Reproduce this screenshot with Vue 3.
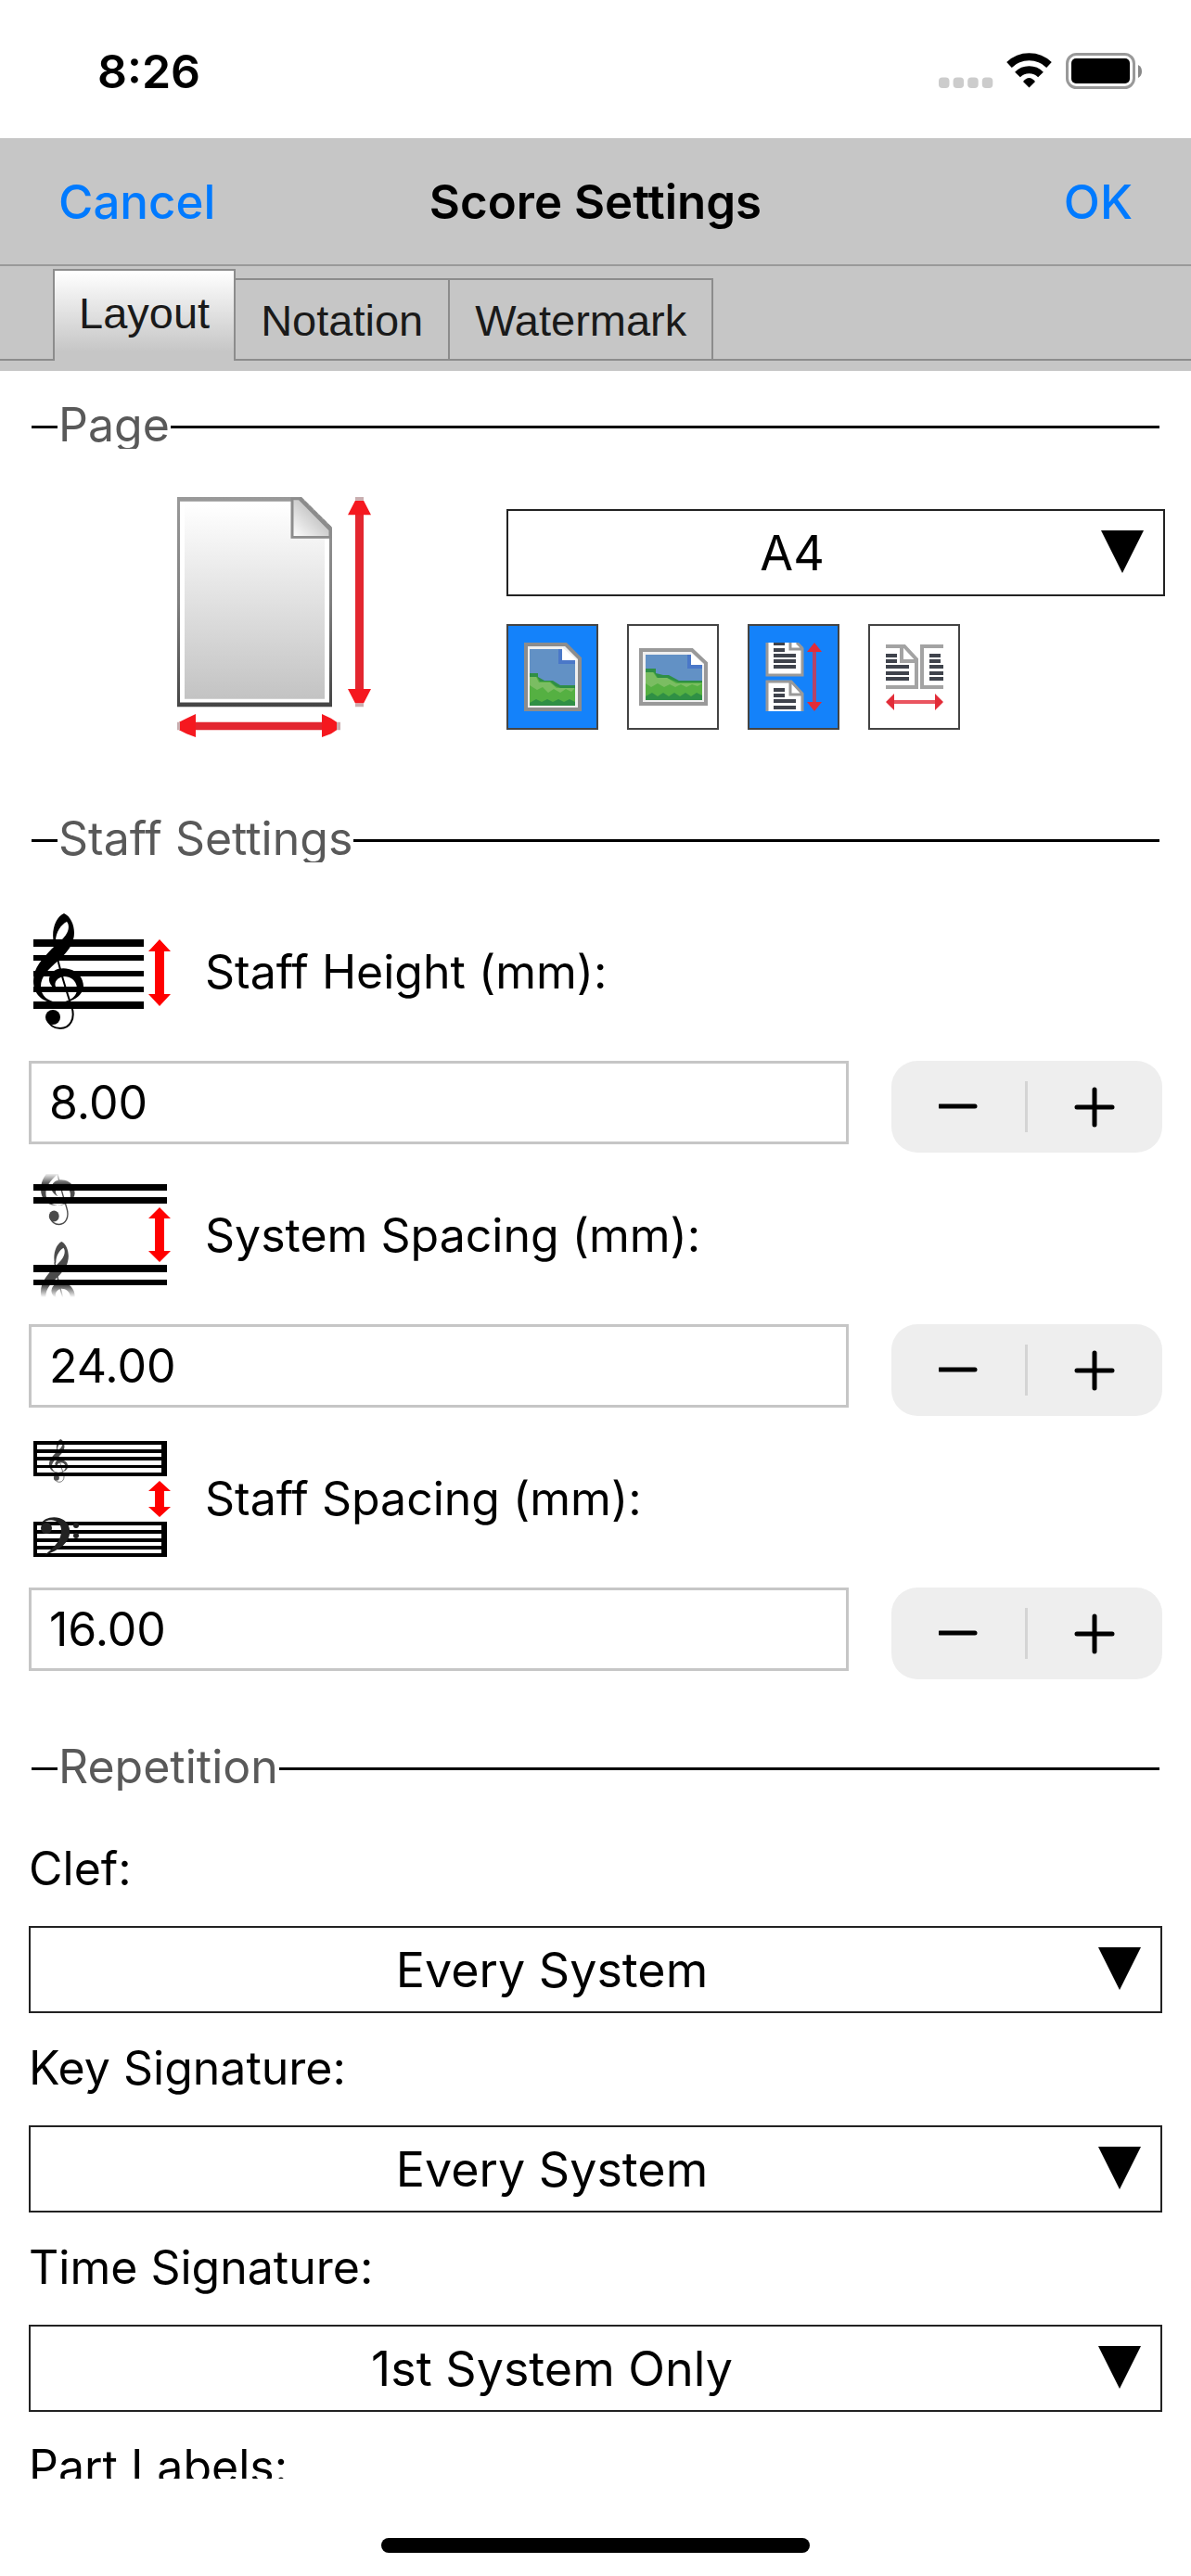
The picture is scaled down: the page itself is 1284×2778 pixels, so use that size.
<template>
  <div class="screen">
    <!-- shared shapes for the icons -->
    <svg class="defs" width="0" height="0" aria-hidden="true">
      <symbol id="treble" viewBox="0 0 56 126" preserveAspectRatio="none">
        <path d="M33 0C42 4 46 18 43 28C41 37 34 44 27 51C16 60 8 68 8 79C8 89 16 95 26 96C12 98 0 88 0 73C0 58 10 49 20 38C23 35 28 31 32 27C39 20 39 12 36 9C30 12 24 20 24 30L22 32C19 18 24 4 33 0Z" />
        <path d="M32 84C22 83 16 76 17 70C19 60 30 58 38 60C48 62 54 70 54 79C53 90 40 97 26 96C38 96 48 90 47 80C46 72 40 68 33 68C26 69 22 74 24 79C25 82 28 84 32 84Z" />
        <path d="M22 30C26 52 36 85 41 100C46 114 39 124 29 124C22 124 17 120 15 114" fill="none" stroke="#000" stroke-width="2" />
        <circle cx="21" cy="112" r="8" />
      </symbol>
    </svg>

    <div class="status">
      <span class="time">8:26</span>
      <svg width="220" height="40" viewBox="0 0 220 40" aria-hidden="true">
        <path d="M4 26h4a4 4 0 0 1 4 4v4a4 4 0 0 1 -4 4h-4a4 4 0 0 1 -4 -4v-4a4 4 0 0 1 4 -4z" fill="none" />
        <rect v-for="n in 4" :key="n" :x="n * 15.6 - 15.6" y="26.5" width="11.5" height="11.5" rx="4" fill="#ccc" />
        <g fill="none" stroke="#000" stroke-width="8">
          <path d="M76 13A31 31 0 0 1 119 13" />
          <path d="M85 23.5A17.5 17.5 0 0 1 110 23.5" />
        </g>
        <path d="M97.5 37.5L91 31Q97.5 23 104 31Z" />
        <rect x="138.5" y="1.5" width="72" height="36" rx="10" fill="none" stroke="#999" stroke-width="3" />
        <rect x="143" y="6" width="63" height="27" rx="5" />
        <path d="M215 13Q219 15 219 20Q219 25 215 27Z" fill="#888" />
      </svg>
    </div>

    <header class="top">
      <nav class="bar">
        <button type="button" class="action">Cancel</button>
        <h1>Score Settings</h1>
        <button type="button" class="action ok">OK</button>
      </nav>
      <div class="tabs" role="tablist">
        <button
          v-for="tab in tabs"
          :key="tab"
          type="button"
          role="tab"
          class="tab"
          :class="{ active: tab === activeTab }"
          :aria-selected="tab === activeTab"
          @click="activeTab = tab"
        >{{ tab }}</button>
      </div>
    </header>

    <main class="content">
      <section>
        <h2 class="legend"><span>Page</span></h2>
        <div class="page-row">
          <svg class="page-icon" width="212" height="260" viewBox="0 0 212 270" preserveAspectRatio="none" aria-hidden="true">
            <defs>
              <linearGradient id="edge" x1="0" y1="0" x2="0" y2="1">
                <stop offset="0" stop-color="#999" />
                <stop offset="0.5" stop-color="#808080" />
                <stop offset="1" stop-color="#444" />
              </linearGradient>
              <linearGradient id="sheet" x1="0" y1="0" x2="0" y2="1">
                <stop offset="0" stop-color="#fff" />
                <stop offset="1" stop-color="#c3c3c3" />
              </linearGradient>
              <linearGradient id="fold" x1="0" y1="1" x2="1" y2="0">
                <stop offset="0" stop-color="#fff" />
                <stop offset="0.6" stop-color="#c8c8c8" />
              </linearGradient>
            </defs>
            <path d="M0 0H134L167 34V235H0Z" fill="url(#edge)" />
            <path d="M3 5H132L164 37V230H3Z" fill="#fff" />
            <path d="M8 8H123V46H159V226H8Z" fill="url(#sheet)" />
            <path d="M124 2V45H165V37L132 2Z" fill="url(#fold)" stroke="#8c8c8c" stroke-width="3" />
            <path d="M132 1L166 36" stroke="#8c8c8c" stroke-width="4" stroke-dasharray="5 2" />
            <path d="M192 17H201V218H192ZM9 252V261H167V252Z" fill="#e3262f" />
            <path d="M192 4H201L205 12L209 20H184L188 12ZM192 231H201L205 223L209 215H184L188 223ZM2 252V261L10 265L20 269V243L10 248ZM172 252V261L166 265L156 269V243L166 248Z" fill="#f5181f" />
            <path d="M192 0H201V4H192ZM192 231H201V235H192ZM0 252H3V261H0ZM172 252H176V261H172Z" fill="#c9aeb0" />
          </svg>
          <div class="page-controls">
            <div class="select">
              <select v-model="paper" aria-label="Page size">
                <option>A4</option>
                <option>A5</option>
                <option>Letter</option>
              </select>
              <svg class="arrow" width="46" height="46" viewBox="0 0 46 46" aria-hidden="true"><path d="M0 0H46L23 46Z" /></svg>
            </div>
            <div class="modes">
              <button type="button" class="mode" :class="{ on: orientation === 'portrait' }" aria-label="Portrait" @click="orientation = 'portrait'">
                <svg width="74" height="74" viewBox="0 0 74 74">
                  <path d="M8 2H51L66 17V72H8Z" fill="#efefef" stroke="#8c8c8c" stroke-width="4" />
                  <path d="M12 7H45V23H61V68H12Z" fill="#6291c5" />
                  <path d="M45 7V21H61" fill="none" stroke="#4a78c8" stroke-width="4" />
                  <path d="M47 5L63 19H47Z" fill="#fff" />
                  <path d="M12 33H21V37L28 41H37L45 46H61V68H12Z" fill="#2f8f45" />
                  <path d="M12 37H20L23 42H34L40 47L48 50H61V64L55 61L49 64L43 61L37 64L31 61L25 64L19 61L12 65Z" fill="#55b042" />
                  <path d="M12 37H19L22 43H34L41 49H61L57 53L51 50L45 54L38 50L32 54L26 48L20 51L12 46Z" fill="#7bbd62" />
                </svg>
              </button>
              <button type="button" class="mode" :class="{ on: orientation === 'landscape' }" aria-label="Landscape" @click="orientation = 'landscape'">
                <svg width="74" height="74" viewBox="0 0 74 74">
                  <path d="M2 8H57L72 22V66H2Z" fill="#efefef" stroke="#999" stroke-width="4" />
                  <path d="M7 13H55V28H68V62H7Z" fill="#6291c5" />
                  <path d="M54 13V26H68" fill="none" stroke="#4a78c8" stroke-width="4" />
                  <path d="M56 11L70 24H56Z" fill="#fff" />
                  <path d="M7 28H18V33L26 35H32L43 41H68V62H7Z" fill="#2f8f45" />
                  <path d="M7 32H16L20 38H30L42 43H68V57L62 54L56 58L50 54L44 58L38 54L32 58L26 54L20 58L14 54L7 58Z" fill="#55b042" />
                  <path d="M7 32H15L19 38H30L40 44H68L63 47L57 45L51 48L45 45L39 48L33 45L27 48L20 44L13 48L7 44Z" fill="#7bbd62" />
                </svg>
              </button>
              <button type="button" class="mode" :class="{ on: flow === 'vertical' }" aria-label="Vertical pages" @click="flow = 'vertical'">
                <svg width="74" height="74" viewBox="0 0 74 74">
                  <path d="M8 0V35H46V6L41 0Z" fill="#fff" />
                  <path d="M8 0V35H46V7H33V0M40 0L46 6" fill="none" stroke="#999" stroke-width="3" />
                  <path d="M8 74V42H34L46 55V74Z" fill="#fff" />
                  <path d="M8 74V42H34L46 55V74M33 42V56H46" fill="none" stroke="#999" stroke-width="3" />
                  <path d="M15 1H27M15 8H27M15 14H39M15 20H39M15 26H39M15 51H27M15 57H27M15 63H39M15 70H39" stroke="#3f434c" stroke-width="4" />
                  <path d="M59 7V67" stroke="#b34468" stroke-width="4" />
                  <path d="M59 0L67 10H51ZM59 74L67 64H51Z" fill="#e22c38" />
                </svg>
              </button>
              <button type="button" class="mode" :class="{ on: flow === 'horizontal' }" aria-label="Horizontal pages" @click="flow = 'horizontal'">
                <svg width="74" height="74" viewBox="0 0 74 74">
                  <path d="M6 4H26L39 18V48H6M23 5V20H38M68 4H45V48H68" fill="none" stroke="#a3a3a3" stroke-width="4" />
                  <path d="M6 14H18M6 20H18M6 26H31M6 33H31M6 39H31M53 14H65M53 20H65M53 26H68M53 33H68M53 39H68" stroke="#3f434c" stroke-width="4" />
                  <path d="M12 64H62" stroke="#ea5560" stroke-width="4" />
                  <path d="M6 64L15 55V73ZM68 64L59 55V73Z" fill="#e22c38" />
                </svg>
              </button>
            </div>
          </div>
        </div>
      </section>

      <section>
        <h2 class="legend"><span>Staff Settings</span></h2>
        <div class="staff">
          <template v-for="(field, i) in staffFields" :key="field.id">
            <label class="staff-label" :for="field.id">
              <svg v-if="i === 0" width="148" height="126" viewBox="0 0 148 126" aria-hidden="true">
                <path d="M0 28H119V36H0ZM0 45H119V51H0ZM0 62H119V68H0ZM0 79H119V85H0ZM0 95H119V103H0Z" />
                <use href="#treble" width="56" height="126" />
                <path class="red" d="M136 28L148 41H141V87H148L136 100L124 87H131V41H124Z" />
              </svg>
              <svg v-else-if="i === 1" width="148" height="134" viewBox="0 0 148 134" aria-hidden="true">
                <defs>
                  <linearGradient id="fadeUp" x1="0" y1="0" x2="0" y2="1">
                    <stop offset="0" stop-color="#fff" />
                    <stop offset="1" stop-color="#fff" stop-opacity="0" />
                  </linearGradient>
                  <linearGradient id="fadeDown" x1="0" y1="1" x2="0" y2="0">
                    <stop offset="0" stop-color="#fff" />
                    <stop offset="1" stop-color="#fff" stop-opacity="0" />
                  </linearGradient>
                </defs>
                <path d="M0 12H144V19H0ZM0 26H144V33H0ZM0 99H144V107H0ZM0 115H144V121H0Z" />
                <svg y="1" width="60" height="56" opacity="0.7">
                  <use href="#treble" x="8" y="-38" width="38" height="94" />
                </svg>
                <svg y="74" width="60" height="60" opacity="0.7">
                  <use href="#treble" x="8" y="0" width="38" height="94" />
                </svg>
                <rect x="6" y="0" width="42" height="12" fill="url(#fadeUp)" />
                <rect x="6" y="121" width="42" height="13" fill="url(#fadeDown)" />
                <path class="red" d="M136 37L148 49H141V84H148L136 96L124 84H131V49H124Z" />
              </svg>
              <svg v-else width="148" height="128" viewBox="0 0 148 128" aria-hidden="true">
                <path d="M0 2H144V40H0ZM4 6V11H138V6ZM4 15V19H138V15ZM4 23V28H138V23ZM4 31V36H138V31Z" fill-rule="evenodd" />
                <path d="M0 89H144V127H0ZM4 93V98H138V93ZM4 102V107H138V102ZM4 111V115H138V111ZM4 119V123H138V119Z" fill-rule="evenodd" />
                <use href="#treble" x="17" y="0" width="21" height="47" opacity="0.7" />
                <g fill="#222">
                  <circle cx="14" cy="96" r="6" />
                  <path d="M8 92C11 82 36 80 39 97C41 111 28 120 12 125C22 117 31 109 30 97C29 86 16 84 8 92Z" />
                  <circle cx="46" cy="93" r="3" />
                  <circle cx="46" cy="104" r="3" />
                </g>
                <path class="red" d="M136 45L148 56H141V73H148L136 84L124 73H131V56H124Z" />
              </svg>
              <span>{{ field.label }}</span>
            </label>
            <div class="staff-input">
              <input :id="field.id" v-model="field.value" type="text" inputmode="decimal" />
              <div class="stepper">
                <button type="button" :aria-label="'Decrease ' + field.label" @click="step(field, -1)">
                  <svg width="44" height="44" viewBox="0 0 44 44"><path d="M1 21H39" /></svg>
                </button>
                <button type="button" :aria-label="'Increase ' + field.label" @click="step(field, 1)">
                  <svg width="44" height="44" viewBox="0 0 44 44"><path d="M3 22H41M22 3V41" /></svg>
                </button>
              </div>
            </div>
          </template>
        </div>
      </section>

      <section>
        <h2 class="legend"><span>Repetition</span></h2>
        <div class="repetition">
          <div v-for="item in repetition" :key="item.id" class="rep-field">
            <label :for="item.id">{{ item.label }}</label>
            <div class="select">
              <select :id="item.id" v-model="item.value">
                <option v-for="option in repeatOptions" :key="option">{{ option }}</option>
              </select>
              <svg class="arrow" width="46" height="46" viewBox="0 0 46 46" aria-hidden="true"><path d="M0 0H46L23 46Z" /></svg>
            </div>
          </div>
        </div>
      </section>
    </main>

    <footer class="home"><div class="home-bar"></div></footer>
  </div>
</template>

<script setup>
import { ref } from 'vue'

const tabs = ['Layout', 'Notation', 'Watermark']
const activeTab = ref('Layout')

const paper = ref('A4')
const orientation = ref('portrait')
const flow = ref('vertical')

const staffFields = ref([
  { id: 'staff-height', label: 'Staff Height (mm):', value: '8.00' },
  { id: 'system-spacing', label: 'System Spacing (mm):', value: '24.00' },
  { id: 'staff-spacing', label: 'Staff Spacing (mm):', value: '16.00' }
])

const repeatOptions = ['Every System', '1st System Only', 'Never']
const repetition = ref([
  { id: 'clef', label: 'Clef:', value: 'Every System' },
  { id: 'key-signature', label: 'Key Signature:', value: 'Every System' },
  { id: 'time-signature', label: 'Time Signature:', value: '1st System Only' },
  { id: 'part-labels', label: 'Part Labels:', value: 'Every System' }
])

function step(field, amount) {
  const next = (parseFloat(field.value) || 0) + amount
  field.value = Math.max(0, next).toFixed(2)
}
</script>

<style>
body {
  margin: 0;
  background: #fff;
}
</style>

<style scoped>
.screen {
  display: flex;
  flex-direction: column;
  height: 100vh;
  overflow: hidden;
  background: #fff;
  color: #000;
  font-family: Inter, "Liberation Sans", sans-serif;
  font-size: 50px;
}
.screen * {
  box-sizing: border-box;
}
.defs {
  position: absolute;
}
button,
input,
select {
  margin: 0;
  padding: 0;
  border: 0;
  border-radius: 0;
  background: none;
  color: inherit;
  font: inherit;
}
svg {
  display: block;
  flex: none;
}
.status {
  display: flex;
  align-items: center;
  justify-content: space-between;
  flex: none;
  height: 149px;
  padding: 5px 52px 0 105px;
}
.time {
  font-weight: 600;
}
.top {
  flex: none;
  background: #c6c6c6;
}
.bar {
  display: grid;
  grid-template-columns: 1fr auto 1fr;
  align-items: center;
  height: 138px;
  padding: 0 63px;
  border-bottom: 2px solid #999;
}
.bar h1 {
  margin: 0;
  font-size: 51px;
  font-weight: 600;
}
.action {
  justify-self: start;
  color: #007aff;
  font-size: 51px;
  font-weight: 500;
}
.ok {
  justify-self: end;
}
.tabs {
  display: flex;
  align-items: flex-end;
  height: 102px;
  margin-bottom: 11px;
  padding-left: 57px;
  border-bottom: 2px solid #8c8c8c;
}
.tab {
  height: 87px;
  padding: 2px 27px 0;
  border: 2px solid #8c8c8c;
  border-width: 2px 2px 0 0;
  color: #1a1a1a;
  font-family: "Liberation Sans", Arial, sans-serif;
  font-size: 47px;
}
.tab.active {
  height: 99px;
  margin-bottom: -2px;
  padding: 0 26px 6px;
  border-left-width: 2px;
  background: linear-gradient(#fff, #c6c6c6 90%);
}
.content {
  flex: 1;
  min-height: 0;
  overflow: hidden;
  padding: 37px 31px 0;
}
.legend {
  display: flex;
  align-items: center;
  margin: 0 3px;
  color: #595959;
  font-size: 50px;
  font-weight: 400;
}
.legend span {
  height: 47px;
  padding: 0 1px;
  overflow: hidden;
  line-height: 42px;
}
.legend::before,
.legend::after {
  content: "";
  width: 28px;
  height: 3px;
  background: #000;
}
.legend::after {
  flex: 1;
}
.page-row {
  display: flex;
  margin: 52px -3px 0 0;
  padding-bottom: 87px;
}
.page-icon {
  margin: 0 143px 0 160px;
}
.page-controls {
  flex: 1;
  padding-top: 13px;
}
.select {
  position: relative;
}
.select select {
  display: block;
  width: 100%;
  height: 94px;
  padding-right: 94px;
  border: 2px solid #222;
  background: #fff;
  appearance: none;
  font-size: 52px;
  text-align: center;
  text-align-last: center;
}
.arrow {
  position: absolute;
  top: 23px;
  right: 23px;
  pointer-events: none;
}
.modes {
  display: flex;
  gap: 31px;
  margin-top: 30px;
}
.mode {
  display: flex;
  align-items: center;
  justify-content: center;
  width: 99px;
  height: 114px;
  border: 2px solid #444;
}
.mode.on {
  background: #1482fa;
}
.staff {
  padding: 50px 0 73px;
}
.staff-label {
  display: flex;
  align-items: center;
  gap: 37px;
  height: 136px;
  padding-left: 5px;
}
.red {
  fill: #f00;
}
.staff-input {
  display: flex;
  align-items: flex-start;
  gap: 46px;
  margin: 28px 0 21px;
}
.staff-input:last-child {
  margin-bottom: 0;
}
.staff-input input {
  flex: 1;
  min-width: 0;
  height: 90px;
  padding: 0 19px;
  border: 3px solid #c6c6c6;
}
.stepper {
  display: flex;
  position: relative;
  width: 292px;
  height: 99px;
  border-radius: 28px;
  background: #eee;
}
.stepper::after {
  content: "";
  position: absolute;
  top: 22px;
  left: 144px;
  width: 3px;
  height: 55px;
  background: #d4d4d4;
}
.stepper button {
  display: flex;
  align-items: center;
  justify-content: center;
  flex: 1;
}
.stepper path {
  fill: none;
  stroke: #000;
  stroke-width: 5;
  stroke-linecap: round;
}
.repetition {
  padding-top: 53px;
}
.rep-field {
  margin-bottom: 28px;
}
.rep-field label {
  display: block;
  margin-bottom: 31px;
  line-height: 62px;
}
.home {
  display: flex;
  justify-content: center;
  align-items: flex-end;
  flex: none;
  height: 105px;
  padding-bottom: 25px;
}
.home-bar {
  width: 36%;
  height: 16px;
  border-radius: 8px;
  background: #000;
}
</style>
